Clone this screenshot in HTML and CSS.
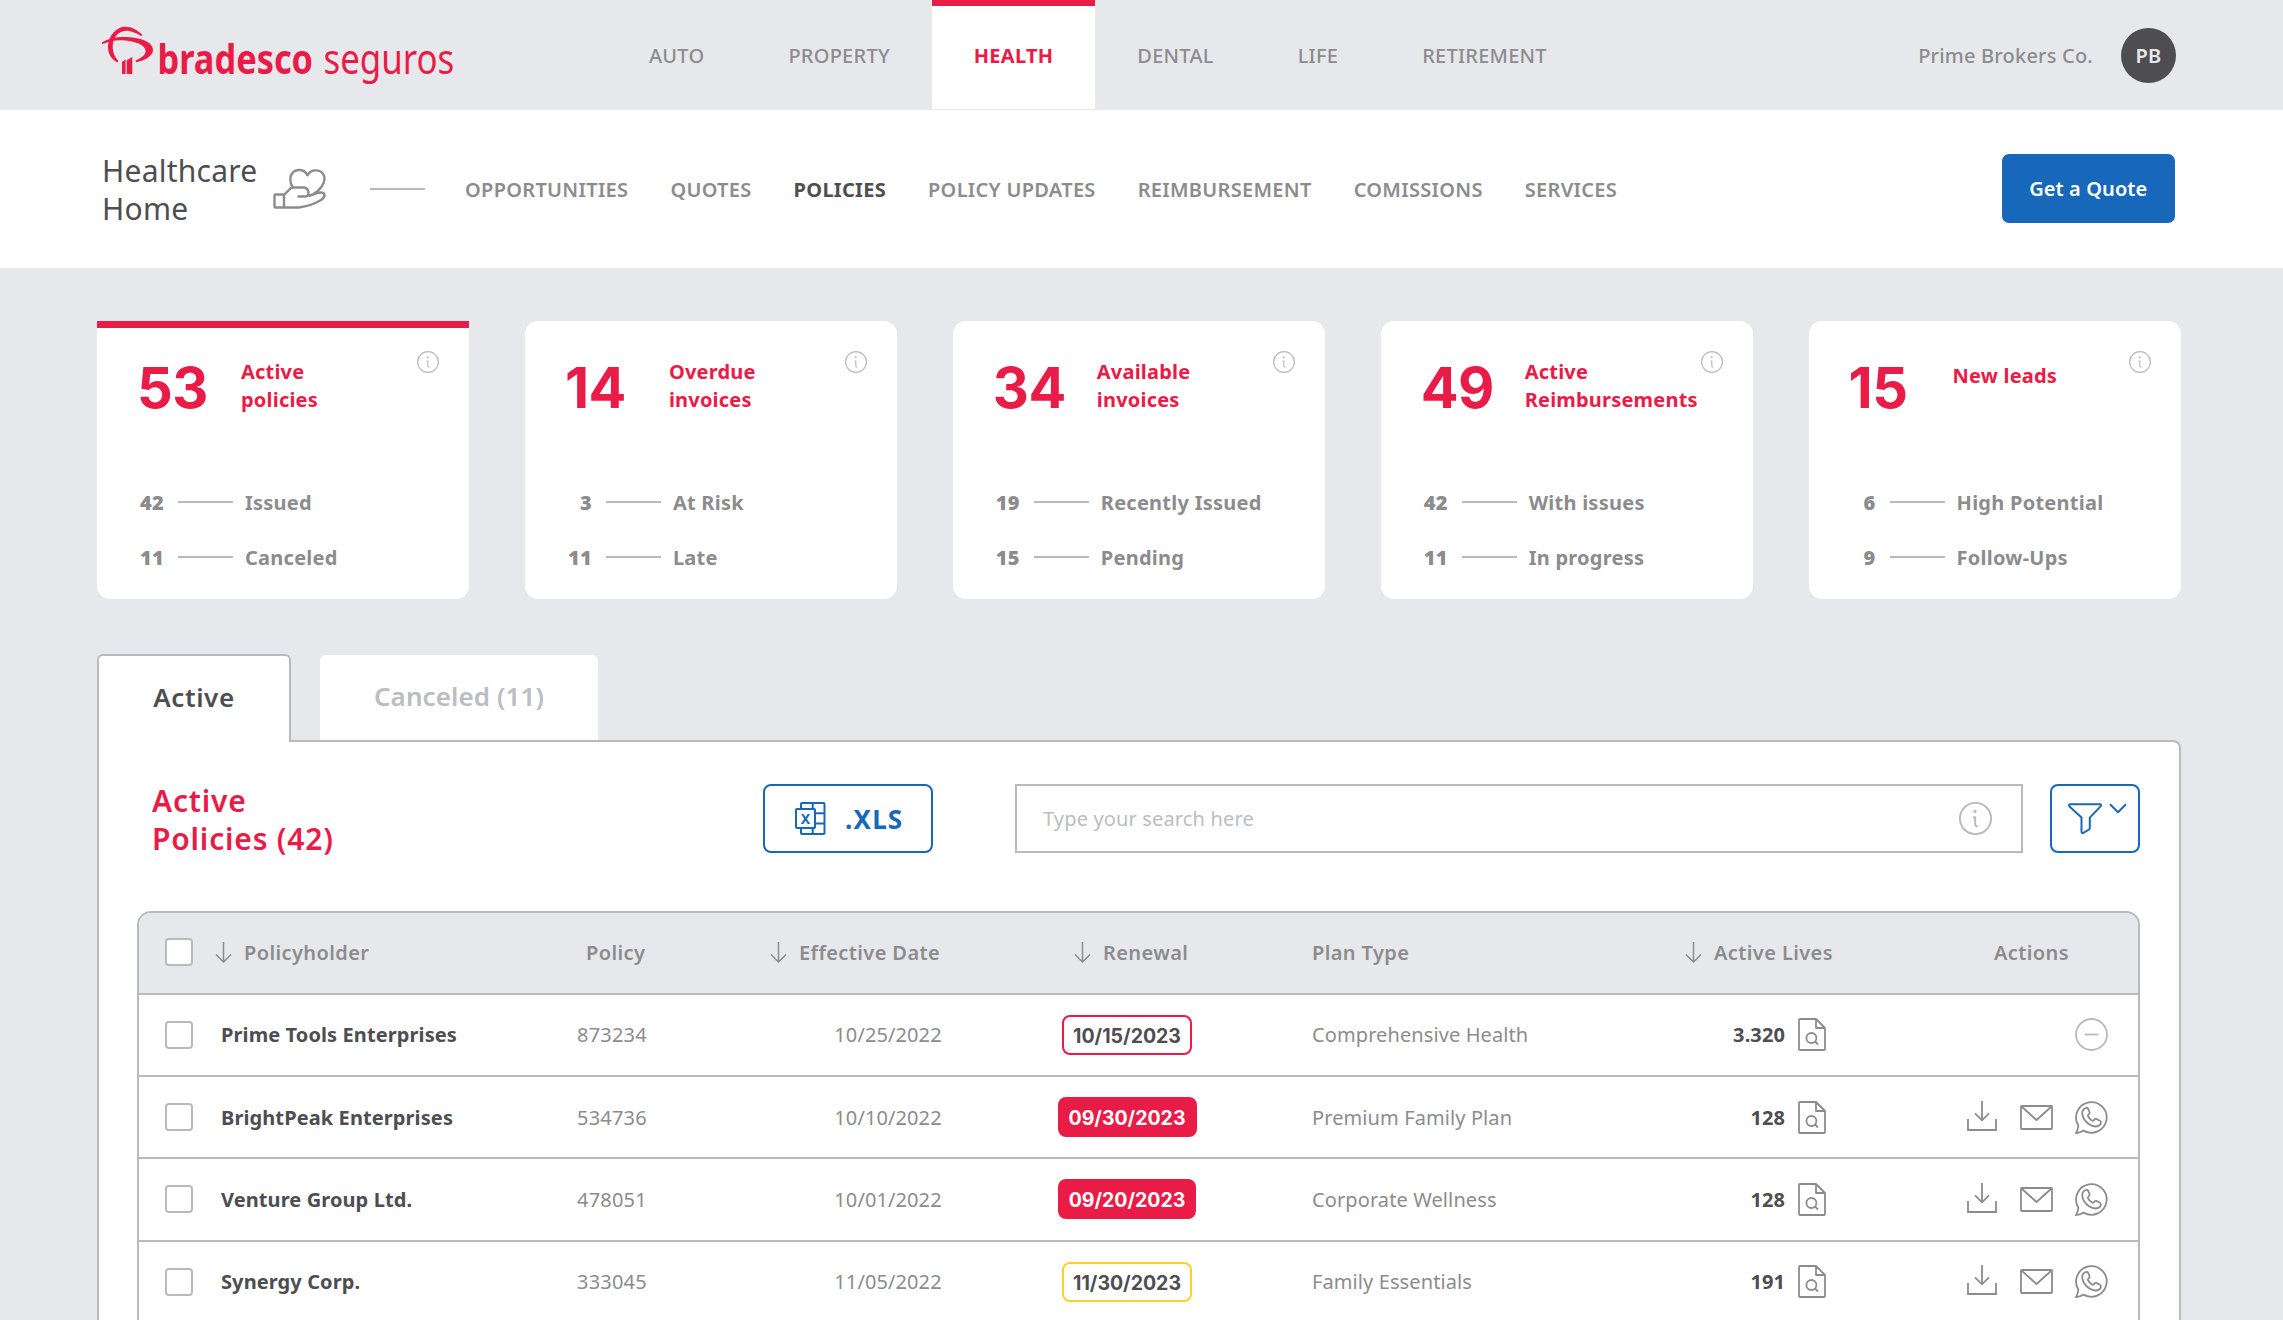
FILE: index.html
```html
<!DOCTYPE html>
<html lang="en">
<head>
    <meta charset="UTF-8">
    <meta name="viewport" content="width=device-width, initial-scale=1.0">
    <title>Bradesco Seguros - Policies</title>
    <link rel="stylesheet" href="styles.css">
</head>
<body>

<!-- Shared icons -->
<svg class="sprite" width="0" height="0">
    <symbol id="icon-info" viewBox="0 0 33 33">
        <circle cx="16.5" cy="16.5" r="15.6"/>
        <circle class="dot" cx="16" cy="9.3" r="1.6"/>
        <path d="M14 15.2h2.2v7q0 2.2 2.6 2.2"/>
    </symbol>
    <symbol id="icon-arrow" viewBox="0 0 17 21">
        <path d="M8.5 0v20M1 12.5l7.5 7.5 7.5-7.5"/>
    </symbol>
    <symbol id="icon-doc" viewBox="0 0 28 33">
        <path d="M2 1h16l9 9v21q0 1-1 1H2q-1 0-1-1V2q0-1 1-1zM18 1v9h9"/>
        <circle cx="13.4" cy="20" r="5"/>
        <path d="M17 23.5l3 3"/>
    </symbol>
    <symbol id="icon-download" viewBox="0 0 30 30">
        <path d="M15 0v19M8 12.3l7 7 7-7M1 18v11h28V18"/>
    </symbol>
    <symbol id="icon-mail" viewBox="0 0 33 25">
        <rect x="1" y="1" width="31" height="23" rx="0.8"/>
        <path d="M1.5 1.5l15 13.5 15-13.5"/>
    </symbol>
    <symbol id="icon-whatsapp" viewBox="0 0 33 33">
        <path d="M8.6 29.6A15.3 15.3 0 1 0 3.2 24.2Q3.8 26.5 1 32.1 4.5 31.8 8.6 29.6z"/>
        <path d="M12 6.8Q9.500 6.600 7.700 9.500 6.300 13.500 9.200 18.300 13 24.300 20 25.500 24.300 25.600 25.800 22.600 26.200 20.400 25 19.800L21.300 17.900Q20.200 17.500 19.300 18.800 18.300 20.300 17 19.500 14.500 18 13 15.200 12.600 14.300 13.800 13.300 15 12.200 14.500 11L13.200 7.800Q12.800 6.900 12 6.800z"/>
    </symbol>
    <symbol id="icon-minus" viewBox="0 0 33 33">
        <circle cx="16.5" cy="16.5" r="15.5"/>
        <path d="M9.5 16.5h14"/>
    </symbol>
</svg>

<header class="topbar">
    <div class="brand">
        <svg class="logo" viewBox="102 20 380 70" width="380" height="70">
            <path d="M142.500 35C136 28.500 127 24.500 119 28.300C110 33 106.500 43 108.600 52C110 57 113.500 60.500 117.500 62.500L118.300 60.800C113.500 56 111.500 48 113.500 41C116 33.500 122 30 129 31C134 32 139 34.500 141 36Z"/>
            <path d="M102 42.500C108 38.200 118 36.500 127 37C141 37.800 153 42 153 50C153 56 145 60.500 136 62.300L135.500 60.600C142 57.500 146 54.500 145.500 50.500C145 45 136 41.500 125 40.500C116 39.700 108 41.500 102.300 44.300Z"/>
            <path d="M122 62l3.600-2.500V74H122zM126.700 60.300l5.600-3.300V74h-5.600z"/>
            <text class="logo-bold" transform="translate(157.500 74) scale(0.838 1)">bradesco</text>
            <text class="logo-light" transform="translate(323.500 74) scale(0.85 1)">seguros</text>
        </svg>
    </div>
    <nav class="main-nav">
        <a>AUTO</a>
        <a>PROPERTY</a>
        <a class="current">HEALTH</a>
        <a>DENTAL</a>
        <a>LIFE</a>
        <a>RETIREMENT</a>
    </nav>
    <div class="account">
        <span>Prime Brokers Co.</span>
        <span class="avatar">PB</span>
    </div>
</header>

<div class="subbar">
    <h1>Healthcare<br>Home</h1>
    <svg class="care-icon" viewBox="0 0 53 41" width="53" height="41">
        <rect x="1.5" y="26.5" width="9.5" height="13" rx="1"/>
        <path d="M11 27l6.500-6.700q.9-.8 2.300-.8H31q4.500.8 4.500 5.500 0 3.500-4 3.500h-7M35.500 28l10-3.300q5.800-.8 6 2 0 3-3.500 5.300-10 6-22 7.500H11"/>
        <path d="M19.800 19.500C17 15 16.800 11 18 7.500 20.500 1 30.500-.5 34.400 7.200 39 0 49.500 1 51.300 9 52.500 16 46.500 22.500 40.500 26"/>
    </svg>
    <span class="divider"></span>
    <nav class="sub-nav">
        <a>OPPORTUNITIES</a>
        <a>QUOTES</a>
        <a class="current">POLICIES</a>
        <a>POLICY UPDATES</a>
        <a>REIMBURSEMENT</a>
        <a>COMISSIONS</a>
        <a>SERVICES</a>
    </nav>
    <button class="quote-btn" type="button">Get a Quote</button>
</div>

<main>
    <section class="cards">
        <div class="card selected">
            <div class="card-head">
                <strong>53</strong>
                <h2>Active<br>policies</h2>
                <svg class="info"><use href="#icon-info"/></svg>
            </div>
            <ul>
                <li><b>42</b><i></i><span>Issued</span></li>
                <li><b>11</b><i></i><span>Canceled</span></li>
            </ul>
        </div>
        <div class="card">
            <div class="card-head">
                <strong>14</strong>
                <h2>Overdue<br>invoices</h2>
                <svg class="info"><use href="#icon-info"/></svg>
            </div>
            <ul>
                <li><b>3</b><i></i><span>At Risk</span></li>
                <li><b>11</b><i></i><span>Late</span></li>
            </ul>
        </div>
        <div class="card">
            <div class="card-head">
                <strong>34</strong>
                <h2>Available<br>invoices</h2>
                <svg class="info"><use href="#icon-info"/></svg>
            </div>
            <ul>
                <li><b>19</b><i></i><span>Recently Issued</span></li>
                <li><b>15</b><i></i><span>Pending</span></li>
            </ul>
        </div>
        <div class="card">
            <div class="card-head">
                <strong>49</strong>
                <h2>Active<br>Reimbursements</h2>
                <svg class="info"><use href="#icon-info"/></svg>
            </div>
            <ul>
                <li><b>42</b><i></i><span>With issues</span></li>
                <li><b>11</b><i></i><span>In progress</span></li>
            </ul>
        </div>
        <div class="card">
            <div class="card-head">
                <strong>15</strong>
                <h2 class="single">New leads</h2>
                <svg class="info"><use href="#icon-info"/></svg>
            </div>
            <ul>
                <li><b>6</b><i></i><span>High Potential</span></li>
                <li><b>9</b><i></i><span>Follow-Ups</span></li>
            </ul>
        </div>
    </section>

    <div class="tabs">
        <button class="tab active" type="button">Active</button>
        <button class="tab" type="button">Canceled (11)</button>
    </div>

    <section class="panel">
        <div class="toolbar">
            <h2>Active<br>Policies (42)</h2>
            <button class="xls-btn" type="button">
                <svg viewBox="0 0 31 33" width="31" height="33">
                    <path d="M6 7V2q0-1 1-1h21.500q1 0 1 1v29q0 1-1 1H7q-1 0-1-1v-5M17.700 1v6M17.700 26v6M20 11.300h9.500M20 21.500h9.500"/>
                    <rect x="1" y="7" width="19" height="19" rx="1"/>
                    <text x="10.5" y="21.500">X</text>
                </svg>
                .XLS
            </button>
            <div class="search">
                <input type="text" placeholder="Type your search here">
                <svg class="info"><use href="#icon-info"/></svg>
            </div>
            <button class="filter-btn" type="button">
                <svg viewBox="0 0 60 32" width="60" height="32">
                    <path d="M2 1.200h30q1.600.6.600 2.200L21.800 14.600V25q0 1-.8 1.500l-5.500 3.400q-2 .6-2-1.400V14.600L1.500 3.500Q.3 1.800 2 1.200z"/>
                    <path d="M42 1.200l8 8 8-8"/>
                </svg>
            </button>
        </div>

        <div class="table">
            <div class="row head">
                <span class="box"></span>
                <div class="sort"><svg><use href="#icon-arrow"/></svg>Policyholder</div>
                <div class="policy">Policy</div>
                <div class="sort"><svg><use href="#icon-arrow"/></svg>Effective Date</div>
                <div class="sort renewal-head"><svg><use href="#icon-arrow"/></svg>Renewal</div>
                <div class="plan">Plan Type</div>
                <div class="sort"><svg><use href="#icon-arrow"/></svg>Active Lives</div>
                <div class="actions-head">Actions</div>
            </div>
            <div class="row">
                <span class="box"></span>
                <div class="name">Prime Tools Enterprises</div>
                <div class="policy">873234</div>
                <div class="date">10/25/2022</div>
                <div class="date"><span class="pill danger">10/15/2023</span></div>
                <div class="plan">Comprehensive Health</div>
                <div class="lives">3.320<svg><use href="#icon-doc"/></svg></div>
                <div class="actions">
                    <svg class="round muted"><use href="#icon-minus"/></svg>
                </div>
            </div>
            <div class="row">
                <span class="box"></span>
                <div class="name">BrightPeak Enterprises</div>
                <div class="policy">534736</div>
                <div class="date">10/10/2022</div>
                <div class="date"><span class="pill expired">09/30/2023</span></div>
                <div class="plan">Premium Family Plan</div>
                <div class="lives">128<svg><use href="#icon-doc"/></svg></div>
                <div class="actions">
                    <svg class="download"><use href="#icon-download"/></svg>
                    <svg class="mail"><use href="#icon-mail"/></svg>
                    <svg class="round"><use href="#icon-whatsapp"/></svg>
                </div>
            </div>
            <div class="row">
                <span class="box"></span>
                <div class="name">Venture Group Ltd.</div>
                <div class="policy">478051</div>
                <div class="date">10/01/2022</div>
                <div class="date"><span class="pill expired">09/20/2023</span></div>
                <div class="plan">Corporate Wellness</div>
                <div class="lives">128<svg><use href="#icon-doc"/></svg></div>
                <div class="actions">
                    <svg class="download"><use href="#icon-download"/></svg>
                    <svg class="mail"><use href="#icon-mail"/></svg>
                    <svg class="round"><use href="#icon-whatsapp"/></svg>
                </div>
            </div>
            <div class="row">
                <span class="box"></span>
                <div class="name">Synergy Corp.</div>
                <div class="policy">333045</div>
                <div class="date">11/05/2022</div>
                <div class="date"><span class="pill warning">11/30/2023</span></div>
                <div class="plan">Family Essentials</div>
                <div class="lives">191<svg><use href="#icon-doc"/></svg></div>
                <div class="actions">
                    <svg class="download"><use href="#icon-download"/></svg>
                    <svg class="mail"><use href="#icon-mail"/></svg>
                    <svg class="round"><use href="#icon-whatsapp"/></svg>
                </div>
            </div>
        </div>
    </section>
</main>

</body>
</html>
```
FILE: styles.css
```css
* {
    box-sizing: border-box;
}

body {
    margin: 0;
    background-color: #e7e8ec;
    color: #8c8c8e;
    font-family: "Noto Sans", "Open Sans", sans-serif;
    font-size: 20px;
    letter-spacing: 0.1px;
}

h1, h2, ul {
    margin: 0;
    padding: 0;
    list-style: none;
}

button, input {
    font-family: inherit;
    letter-spacing: inherit;
    background-color: #fff;
}

svg {
    fill: none;
    stroke: #8c8c8e;
    stroke-width: 1.8;
    stroke-linejoin: round;
    flex-shrink: 0;
}

.sprite {
    position: absolute;
}

/* Top bar */
.topbar {
    display: flex;
    align-items: center;
    height: 110px;
    padding: 0 107px 0 102px;
}

.brand {
    width: 505px;
    height: 70px;
}

.logo {
    display: block;
    fill: #e91b47;
    stroke: none;
    font-size: 41px;
    letter-spacing: 0;
}

.logo-bold {
    font-weight: 700;
}

.logo-light {
    font-weight: 400;
}

.main-nav {
    display: flex;
    height: 110px;
    font-weight: 500;
    letter-spacing: 0.25px;
}

.main-nav a {
    height: 109px;
    padding: 1px 42px 0;
    line-height: 110px;
}

.main-nav .current {
    background: linear-gradient(#e91b47 6px, #fff 6px);
    color: #e91b47;
    font-weight: 700;
}

.account {
    display: flex;
    align-items: center;
    gap: 28px;
    margin-left: auto;
    font-weight: 500;
    letter-spacing: 0.2px;
}

.avatar {
    width: 55px;
    height: 55px;
    border-radius: 50%;
    background-color: #4e4d51;
    color: #e7e8ec;
    line-height: 55px;
    text-align: center;
    font-weight: 600;
}

/* Section bar */
.subbar {
    display: flex;
    align-items: center;
    height: 158px;
    padding: 0 108px 1px 102px;
    background-color: #fff;
}

.subbar h1 {
    width: 171px;
    padding-top: 3px;
    color: #4e4d51;
    font-size: 30px;
    font-weight: 400;
    line-height: 38px;
    letter-spacing: 0.25px;
}

.care-icon {
    stroke-width: 2.4;
}

.divider {
    width: 55px;
    height: 2px;
    margin: 0 40px 0 44px;
    background-color: #b9bac0;
}

.sub-nav {
    display: flex;
    gap: 42px;
    padding-top: 1px;
    font-weight: 600;
    letter-spacing: 0.3px;
}

.sub-nav .current {
    color: #4e4d51;
    font-weight: 700;
}

.quote-btn {
    width: 173.5px;
    height: 69px;
    margin-left: auto;
    border: none;
    border-radius: 7px;
    background-color: #1768ba;
    color: #fff;
    font-size: 20px;
    font-weight: 600;
}

main {
    padding: 53px 102px 0 97px;
}

/* Summary cards */
.cards {
    display: grid;
    grid-template-columns: repeat(5, 1fr);
    gap: 55.5px;
}

.card {
    height: 278px;
    border-radius: 13px;
    background-color: #fff;
}

.card.selected {
    border-top: 7px solid #e91b47;
    border-radius: 0 0 13px 13px;
}

.card.selected .card-head {
    padding-top: 31px;
    height: 154px;
}

.card-head {
    display: flex;
    height: 161px;
    padding: 38px 30px 0 40px;
    color: #e91b47;
}

.card-head strong {
    width: 104px;
    font-family: Inter, sans-serif;
    font-size: 56px;
    line-height: 59px;
    letter-spacing: -0.5px;
}

.card-head h2 {
    margin-top: -1px;
    font-size: 20px;
    font-weight: 700;
    line-height: 27.5px;
    letter-spacing: 0.2px;
}

.card-head h2.single {
    margin-top: 3px;
}

.card-head .info {
    width: 22px;
    height: 22px;
    margin: -8px 0 0 auto;
    stroke: #b9bac0;
}

.info .dot, .dot {
    fill: #b9bac0;
    stroke: none;
}

.card li {
    display: flex;
    align-items: center;
    height: 40px;
    margin-bottom: 15px;
    font-weight: 700;
    letter-spacing: 0.25px;
}

.card b {
    width: 67px;
    text-align: right;
}

.card i {
    width: 55px;
    height: 2px;
    margin: 0 12px 0 14px;
    background-color: #b9bac0;
}

/* Tabs */
.tabs {
    display: flex;
    gap: 29px;
    margin-top: 55px;
}

.tab {
    position: relative;
    width: 278px;
    height: 85px;
    margin-top: 1px;
    padding: 0 0 3px;
    border: none;
    border-radius: 6px 6px 0 0;
    color: #bcbdc2;
    font-size: 26px;
    font-weight: 600;
}

.tab.active {
    width: 194px;
    height: 88px;
    margin: 0 0 -2px;
    padding: 0 0 4px;
    border: 2px solid #b9bac0;
    border-bottom: none;
    color: #4e4d51;
    letter-spacing: 0.6px;
}

/* Policies panel */
.panel {
    height: 580px;
    padding: 42px 39px 0 38px;
    border: 2px solid #b9bac0;
    border-bottom: none;
    border-radius: 0 8px 0 0;
    background-color: #fff;
    overflow: hidden;
}

.toolbar {
    display: flex;
    height: 69px;
    padding-left: 15px;
}

.toolbar h2 {
    width: 611px;
    margin-top: -2px;
    color: #e91b47;
    font-size: 30px;
    font-weight: 600;
    line-height: 38px;
    letter-spacing: 0.8px;
}

.xls-btn, .filter-btn {
    display: flex;
    align-items: center;
    height: 69px;
    border: 2px solid #1768ba;
    border-radius: 8px;
    color: #1768ba;
}

.xls-btn svg, .filter-btn svg {
    stroke: #1768ba;
    stroke-width: 2;
}

.xls-btn {
    width: 170px;
    padding: 0 0 0 30px;
    gap: 19px;
    font-size: 26px;
    font-weight: 700;
    letter-spacing: 1.2px;
}

.xls-btn text {
    fill: #1768ba;
    stroke: none;
    font-size: 14px;
    font-weight: 700;
    letter-spacing: 0;
    text-anchor: middle;
}

.search {
    display: flex;
    align-items: center;
    width: 1008px;
    margin: 0 27px 0 82px;
    padding: 0 29px 0 26px;
    border: 2px solid #b9bac0;
}

.search input {
    flex: 1;
    padding: 0;
    border: none;
    font-size: 20px;
    letter-spacing: 0.15px;
}

.search input::placeholder {
    color: #bcbdc2;
}

.search .info {
    width: 33px;
    height: 33px;
    stroke: #b9bac0;
    stroke-width: 1.9;
}

.filter-btn {
    width: 90px;
    padding: 1px 0 0 16px;
}

.table {
    margin-top: 57.6px;
    border: 2px solid #b9bac0;
    border-radius: 14px 14px 0 0;
    overflow: hidden;
}

.row {
    display: grid;
    grid-template-columns: 50px 345px 210px 236px 242px 437px 265px 158px;
    align-items: center;
    height: 82.35px;
    padding-left: 26px;
    border-bottom: 2px solid #b9bac0;
}

.head {
    height: 82px;
    padding-bottom: 1px;
    background-color: #e7e8ec;
    font-weight: 600;
    letter-spacing: 0.4px;
}

.box {
    width: 28px;
    height: 28px;
    border: 2px solid #b9bac0;
    border-radius: 4px;
    background-color: #fff;
}

.sort {
    display: flex;
    align-items: center;
    gap: 12px;
}

.sort svg {
    width: 17px;
    height: 21px;
    stroke-width: 1.5;
    stroke-linejoin: miter;
}

.name {
    padding-left: 6px;
    color: #4e4d51;
    font-weight: 700;
}

.policy {
    padding-left: 17px;
    letter-spacing: 0.2px;
}

.head .policy {
    padding-left: 26px;
    letter-spacing: 0.4px;
}

.date {
    text-align: center;
}

.renewal-head {
    padding-left: 68px;
}

.pill {
    display: inline-block;
    height: 40px;
    padding: 0 9px;
    border: 2px solid #e91b47;
    border-radius: 8px;
    color: #4e4d51;
    font-family: Inter, sans-serif;
    font-size: 19.5px;
    font-weight: 700;
    line-height: 38px;
    letter-spacing: 0;
}

.pill.expired {
    background-color: #e91b47;
    color: #fff;
}

.pill.warning {
    border-color: #fdd12d;
}

.plan {
    padding-left: 64px;
}

.lives {
    display: flex;
    align-items: center;
    justify-content: flex-end;
    gap: 13px;
    width: 141px;
    color: #4e4d51;
    font-weight: 700;
}

.lives svg {
    width: 28px;
    height: 33px;
}

.actions-head {
    padding-left: 44px;
}

.actions {
    display: flex;
    align-items: center;
    justify-content: flex-end;
    gap: 22px;
}

.round {
    width: 33px;
    height: 33px;
}

.muted {
    stroke: #b9bac0;
}

.download {
    width: 30px;
    height: 30px;
    margin: 0 1px 3px 0;
    stroke-linejoin: miter;
}

.mail {
    width: 33px;
    height: 25px;
}
```
